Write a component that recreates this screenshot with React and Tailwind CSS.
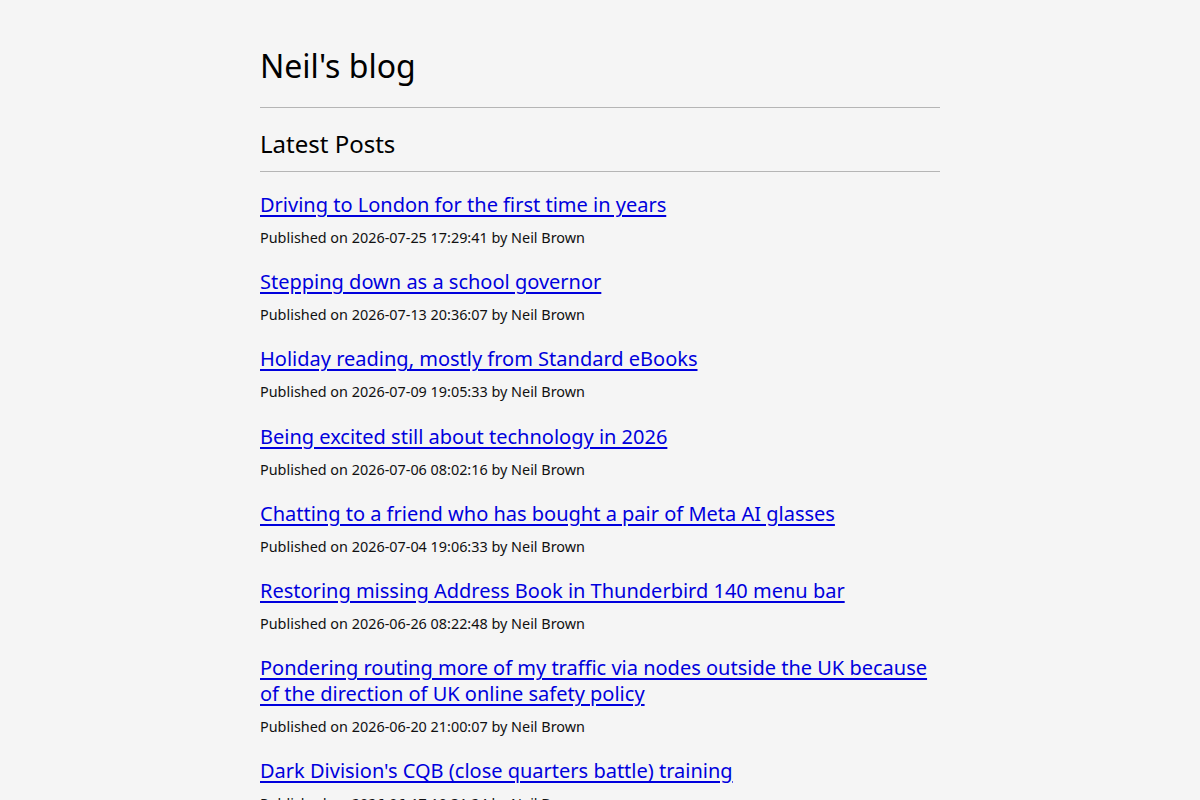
import React from "react";

const posts = [
  { title: "Driving to London for the first time in years", date: "2026-07-25 17:29:41" },
  { title: "Stepping down as a school governor", date: "2026-07-13 20:36:07" },
  { title: "Holiday reading, mostly from Standard eBooks", date: "2026-07-09 19:05:33" },
  { title: "Being excited still about technology in 2026", date: "2026-07-06 08:02:16" },
  { title: "Chatting to a friend who has bought a pair of Meta AI glasses", date: "2026-07-04 19:06:33" },
  { title: "Restoring missing Address Book in Thunderbird 140 menu bar", date: "2026-06-26 08:22:48" },
  {
    title: "Pondering routing more of my traffic via nodes outside the UK because of the direction of UK online safety policy",
    date: "2026-06-20 21:00:07"
  },
  { title: "Dark Division's CQB (close quarters battle) training", date: "2026-06-17 10:31:24" }
];

const App = () => {
  return (
    <div className="min-h-screen bg-[#f5f5f5] font-['Noto_Sans',sans-serif] text-black">
      <div className="mx-auto w-[680px] pt-[44px] pb-10">
        <h1 className="text-[32px] leading-[44px] font-normal">Neil's blog</h1>
        <hr className="mt-[19px] border-0 border-t border-[#b5b5b5]" />
        <h2 className="mt-[20px] text-[24px] leading-[32px] font-normal">Latest Posts</h2>
        <hr className="mt-[11px] border-0 border-t border-[#b5b5b5]" />
        <div className="mt-[20px] flex flex-col gap-[21.2px]">
          {posts.map((post) => (
            <div key={post.date}>
              <a href="#" className="block text-[20px] leading-[26px] text-[#0000dd] underline underline-offset-[3px]">
                {post.title}
              </a>
              <p className="mt-[10px] text-[14.4px] leading-[20px] text-[#111]">
                Published on {post.date} by Neil Brown
              </p>
            </div>
          ))}
        </div>
      </div>
    </div>
  );
};

export default App;
